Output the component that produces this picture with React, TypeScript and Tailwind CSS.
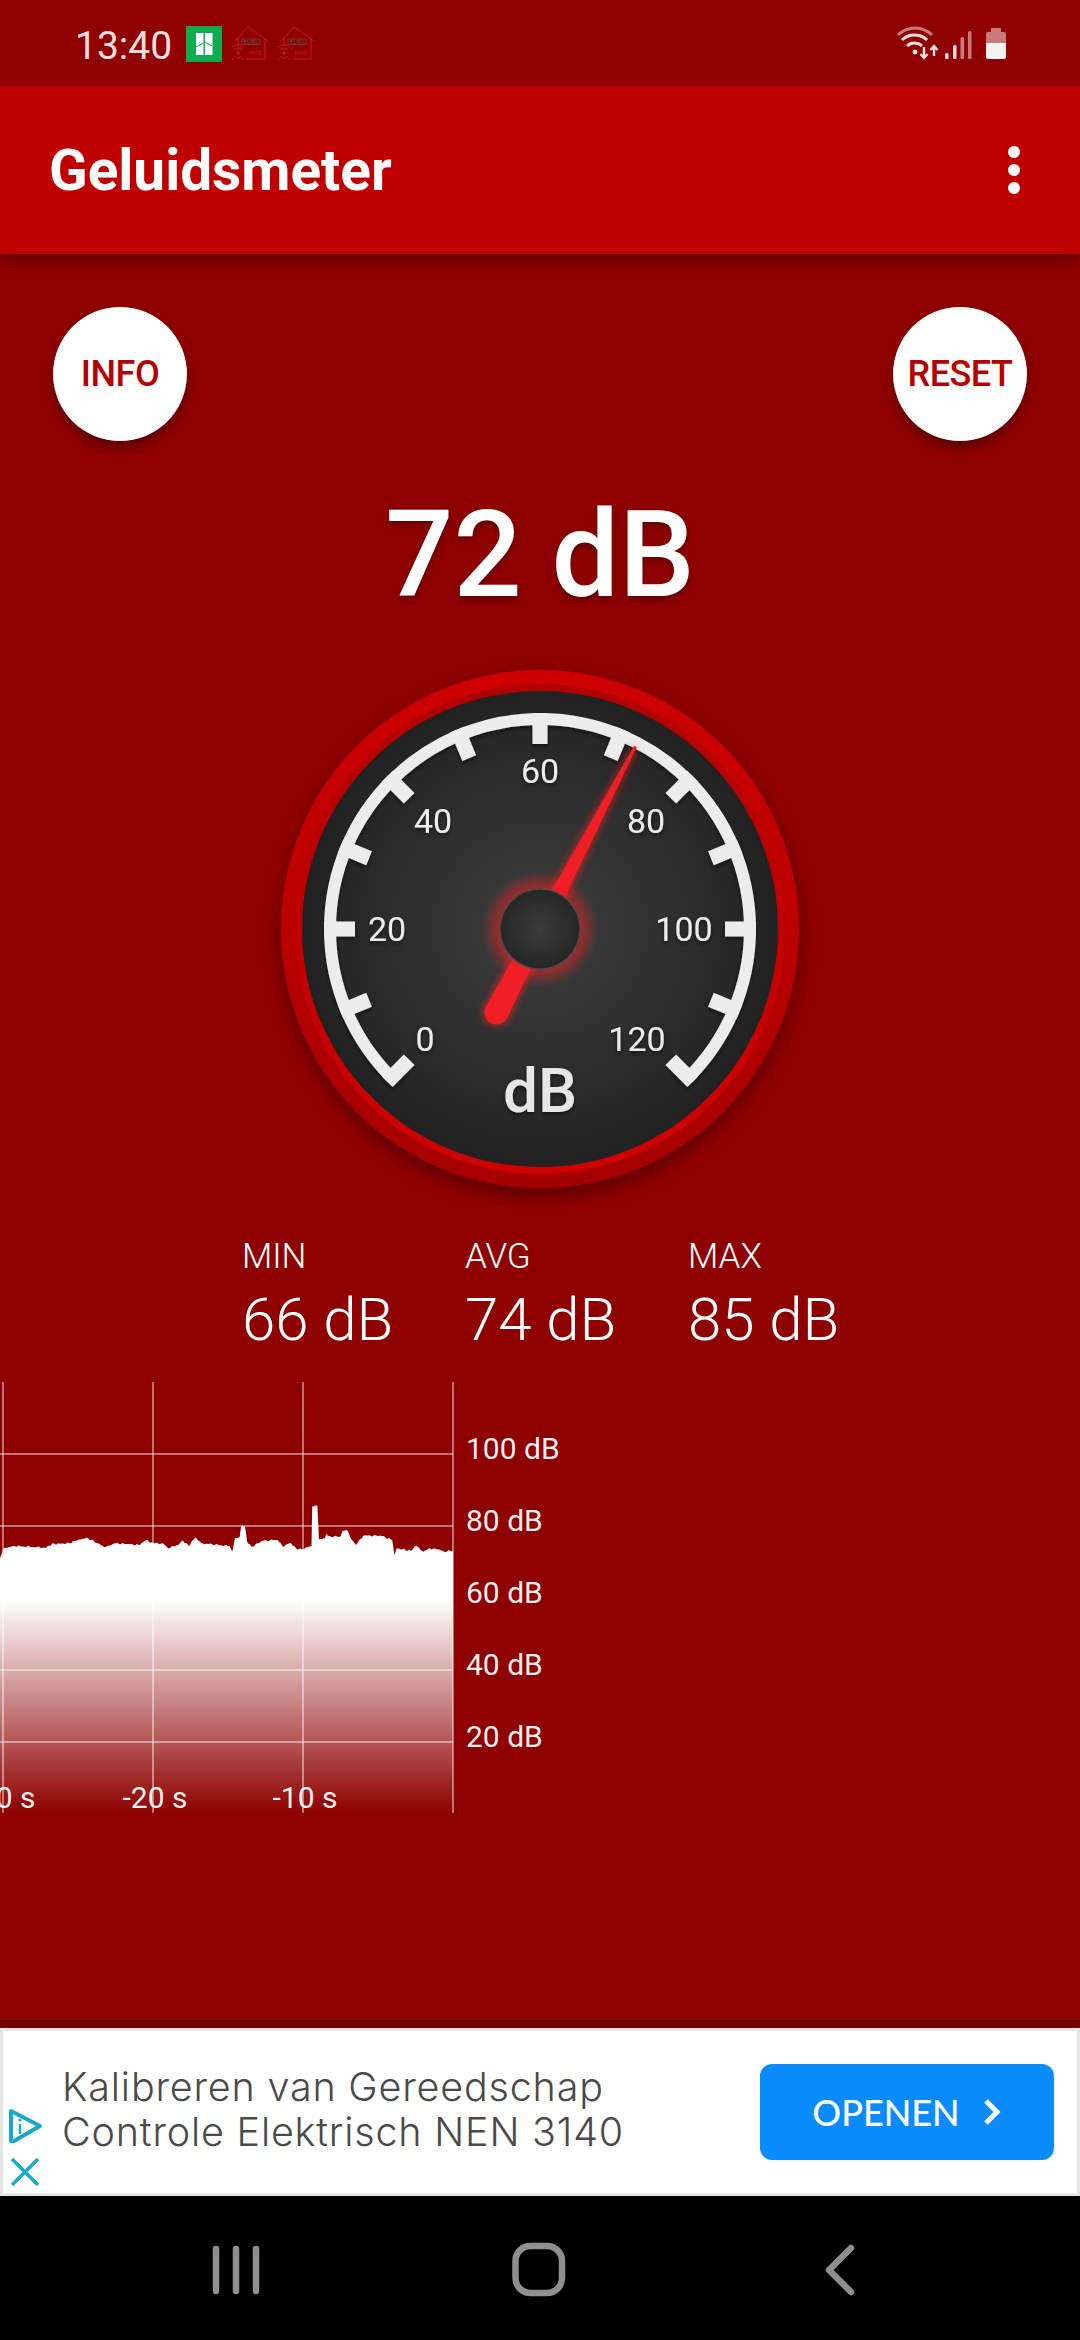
const roboto = "font-['Roboto',sans-serif]";

const points = [
  [0, 565], [10, 535], [40, 528], [125, 533], [140, 522], [190, 520], [205, 512], [235, 503], [265, 520], [285, 532],
  [310, 520], [340, 522], [375, 525], [395, 510], [415, 520], [440, 520], [455, 535], [480, 525], [495, 512], [510, 528],
  [528, 502], [545, 520], [620, 528], [628, 545], [635, 505], [648, 500], [652, 468], [662, 468], [668, 515], [680, 530],
  [710, 512], [750, 510], [765, 530], [785, 518], [800, 535], [815, 538], [842, 528], [844, 408], [858, 408], [862, 508],
  [878, 505], [882, 492], [895, 500], [920, 500], [926, 482], [940, 482], [948, 505], [962, 525], [982, 497], [1030, 497],
  [1060, 510], [1066, 555], [1072, 535], [1110, 542], [1125, 527], [1145, 545], [1162, 535], [1190, 540], [1200, 545], [1224, 542],
];

// zoomed coords to page coords, chart svg starts at y=1382, small jitter so the edge isn't too clean
function buildWave() {
  const out: string[] = [];
  for (let i = 0; i < points.length - 1; i++) {
    const [x0, y0] = points[i];
    const [x1, y1] = points[i + 1];
    const steps = Math.max(1, Math.round((x1 - x0) / 4));
    for (let s = 0; s < steps; s++) {
      const x = x0 + ((x1 - x0) * s) / steps;
      const y = y0 + ((y1 - y0) * s) / steps;
      const jitter = s === 0 ? 0 : (Math.sin(x * 1.3) + Math.sin(x * 0.47)) * 0.5;
      out.push(`${(x / 2.703).toFixed(1)} ${(y / 3 - 12 + jitter).toFixed(1)}`);
    }
  }
  return `M0 431 L${out.join(" L")} L453 ${(542 / 3 - 12).toFixed(1)} L453 431 Z`;
}
const wavePath = buildWave();

function House({ className }: { className?: string }) {
  return (
    <svg className={className} width="36" height="34" viewBox="0 0 36 34" fill="none">
      <path d="M3 15 L16 1 L36 15 M33 13 V33 H15 M6 12 V20" stroke="#d01535" strokeWidth="1" />
      <rect x="10" y="13" width="18" height="5.5" stroke="#6a4a4a" strokeWidth="0.7" />
      <text x="19" y="18" textAnchor="middle" fontSize="6" fill="#6a4a4a" className="font-['Roboto',sans-serif]">ELRO</text>
      <text x="23" y="29" textAnchor="middle" fontSize="6" fill="#d01535" className="font-['Roboto',sans-serif]">HIVE</text>
      <circle cx="6" cy="27" r="1.6" fill="#d01535" />
      <path d="M2 24 A5 5 0 0 1 10 24 M2 30 A5 5 0 0 0 10 30 M0 21 A9 9 0 0 1 12 21 M0 33 A9 9 0 0 0 12 33" stroke="#d01535" strokeWidth="1" />
    </svg>
  );
}

function StatusBar() {
  return (
    <div className="h-[86px] bg-[#8f0000] flex items-center pl-[75px] pr-[74px] shrink-0 relative z-10">
      <span className={`${roboto} text-[39px] leading-none text-[#f7dede] w-[111px] mt-[6px]`}>13:40</span>
      <svg width="36" height="36" viewBox="0 0 36 36" className="mt-[2px]">
        <rect width="36" height="36" fill="#0fac4f" />
        <rect x="10" y="7" width="7.5" height="22" fill="#fff" />
        <rect x="19" y="7" width="7.5" height="22" fill="#fff" />
        <path d="M10 21 L19 16 L26 20" stroke="#0fac4f" strokeWidth="1" fill="none" />
      </svg>
      <House className="ml-[10px]" />
      <House className="ml-[10px]" />
      <div className="flex-1" />
      <svg width="110" height="36" viewBox="0 0 110 36" fill="none">
        <path d="M2 10 A24 24 0 0 1 36 10" stroke="#f7dede" strokeOpacity="0.55" strokeWidth="3" />
        <path d="M6 15 A18 18 0 0 1 31 15" stroke="#f7dede" strokeWidth="3" />
        <path d="M11 21 A11 11 0 0 1 26 21" stroke="#f7dede" strokeWidth="3" />
        <circle cx="19" cy="27" r="2.4" fill="#f7dede" />
        <path d="M28 22 V33 M24.5 29 L28 33 L31.5 29" stroke="#f7dede" strokeWidth="2.4" />
        <path d="M38 31 V21 M34.5 25 L38 21 L41.5 25" stroke="#f7dede" strokeWidth="2.4" />
        <rect x="49" y="28" width="3.5" height="6" rx="1.5" fill="#f7dede" />
        <rect x="57" y="20" width="3.5" height="14" rx="1.5" fill="#f7dede" />
        <rect x="64.5" y="12" width="3.5" height="22" rx="1.5" fill="#f7dede" fillOpacity="0.55" />
        <rect x="72" y="6" width="3.5" height="28" rx="1.5" fill="#f7dede" fillOpacity="0.55" />
        <path d="M90 18 V9 Q90 7 92 7 H95 V3 H105 V7 H108 Q110 7 110 9 V18 Z" fill="#f7dede" fillOpacity="0.55" />
        <path d="M90 18 H110 V32 Q110 34 108 34 H92 Q90 34 90 32 Z" fill="#f7f0f0" />
      </svg>
    </div>
  );
}

function AppBar() {
  return (
    <div className="h-[168px] bg-[#bf0000] flex items-center justify-between pl-[49px] shrink-0 shadow-[0_6px_14px_rgba(0,0,0,0.3)] relative">
      <h1 className={`${roboto} text-[56.75px] font-bold text-white mt-[2px]`}>Geluidsmeter</h1>
      <div className="w-[132px] flex flex-col items-center gap-[6px]">
        <div className="w-3 h-3 rounded-full bg-white" />
        <div className="w-3 h-3 rounded-full bg-white" />
        <div className="w-3 h-3 rounded-full bg-white" />
      </div>
    </div>
  );
}

function RoundButton({ label }: { label: string }) {
  return (
    <button className={`${roboto} w-[134px] h-[134px] rounded-full bg-white text-[#b40000] text-[36px] font-medium tracking-[-0.5px] shadow-[0_7px_10px_rgba(0,0,0,0.32)]`}>
      {label}
    </button>
  );
}

function Gauge() {
  const cx = 280;
  const cy = 280;
  const ticks = [-135, -112.5, -90, -67.5, -45, -22.5, 0, 22.5, 45, 67.5, 90, 112.5, 135];
  const labels = [
    { t: "0", x: 165, y: 389.5 },
    { t: "20", x: 127, y: 279.5 },
    { t: "40", x: 173, y: 171.5 },
    { t: "60", x: 280, y: 121.5 },
    { t: "80", x: 386, y: 171.5 },
    { t: "100", x: 424, y: 279.5 },
    { t: "120", x: 377, y: 389.5 },
  ];
  const pt = (deg: number, r: number) => {
    const a = (deg * Math.PI) / 180;
    return [cx + r * Math.sin(a), cy - r * Math.cos(a)];
  };
  const [ax, ay] = pt(-135, 210);
  const [bx, by] = pt(135, 210);

  return (
    <svg width="560" height="560" viewBox="0 0 560 560" className="block">
      <defs>
        <linearGradient id="rim" x1="0" y1="0" x2="0" y2="1">
          <stop offset="0" stopColor="#cf0000" />
          <stop offset="1" stopColor="#a50000" />
        </linearGradient>
        <linearGradient id="rim2" x1="0" y1="0" x2="0" y2="1">
          <stop offset="0" stopColor="#b00000" />
          <stop offset="1" stopColor="#cf0000" />
        </linearGradient>
        <radialGradient id="face">
          <stop offset="0" stopColor="#3f3f3f" />
          <stop offset="1" stopColor="#222222" />
        </radialGradient>
        <radialGradient id="hub">
          <stop offset="0" stopColor="#3c3c3c" />
          <stop offset="1" stopColor="#262626" />
        </radialGradient>
        <radialGradient id="hubGlow">
          <stop offset="0.7" stopColor="#ff2020" stopOpacity="0.5" />
          <stop offset="1" stopColor="#ff2020" stopOpacity="0" />
        </radialGradient>
        <filter id="drop" x="-20%" y="-20%" width="140%" height="140%">
          <feDropShadow dx="0" dy="8" stdDeviation="9" floodColor="#000" floodOpacity="0.35" />
        </filter>
        <filter id="soft" x="-20%" y="-20%" width="140%" height="140%">
          <feDropShadow dx="0" dy="2" stdDeviation="2" floodColor="#000" floodOpacity="0.5" />
        </filter>
        <filter id="glow" x="-60%" y="-20%" width="220%" height="140%">
          <feGaussianBlur stdDeviation="4" />
        </filter>
      </defs>
      <circle cx={cx} cy={cy} r="259" fill="url(#rim)" filter="url(#drop)" />
      <circle cx={cx} cy={cy} r="245" fill="url(#rim2)" />
      <circle cx={cx} cy={cy} r="238" fill="url(#face)" />

      <g filter="url(#soft)">
        <path d={`M${ax} ${ay} A210 210 0 1 1 ${bx} ${by}`} fill="none" stroke="#ececec" strokeWidth="12" />
        {ticks.map((deg) => {
          const [x1, y1] = pt(deg, 216);
          const [x2, y2] = pt(deg, 185);
          return <line key={deg} x1={x1} y1={y1} x2={x2} y2={y2} stroke="#ececec" strokeWidth="15" />;
        })}
        {labels.map((l) => (
          <text key={l.t} x={l.x} y={l.y + 12} textAnchor="middle" fontSize="34" fill="#ececec" className={roboto}>
            {l.t}
          </text>
        ))}
        <text x={cx} y={463} textAnchor="middle" fontSize="62" fontWeight="500" fill="#e6e6e6" className={roboto}>
          dB
        </text>
      </g>

      <circle cx={cx} cy={cy} r="58" fill="url(#hubGlow)" />
      <g transform={`rotate(27.6 ${cx} ${cy})`}>
        <path d="M278 76 H282 L293 374 A13 13 0 0 1 267 374 Z" fill="#ff2020" filter="url(#glow)" opacity="0.7" />
        <path d="M278.5 74 H281.5 L292 374 A12 12 0 0 1 268 374 Z" fill="#f01f26" />
      </g>
      <circle cx={cx} cy={cy} r="40" fill="url(#hub)" stroke="#4a4a4a" strokeWidth="1.5" />
    </svg>
  );
}

function Stats() {
  const items = [
    { label: "MIN", value: "66 dB" },
    { label: "AVG", value: "74 dB" },
    { label: "MAX", value: "85 dB" },
  ];
  return (
    <div className="flex pl-[242px] mt-[28px]">
      {items.map((item) => (
        <div key={item.label} className={`${roboto} w-[223px] text-white font-light`}>
          <div className="text-[35px] leading-[40px]">{item.label}</div>
          <div className="text-[60px] leading-[68px] mt-[9px]">{item.value}</div>
        </div>
      ))}
    </div>
  );
}

function Chart() {
  const xs = [3, 153, 303, 453];
  const ys = [72, 144, 216, 288, 360];
  const dbLabels = ["100 dB", "80 dB", "60 dB", "40 dB", "20 dB"];
  const timeLabels = [
    { t: "-30 s", x: 3 },
    { t: "-20 s", x: 155 },
    { t: "-10 s", x: 305 },
  ];
  return (
    <svg width="1080" height="432" viewBox="0 0 1080 432" className={`block ${roboto}`}>
      <defs>
        <linearGradient id="fade" gradientUnits="userSpaceOnUse" x1="0" y1="218" x2="0" y2="431">
          <stop offset="0" stopColor="#fff" />
          <stop offset="1" stopColor="#fff" stopOpacity="0" />
        </linearGradient>
      </defs>
      <path d={wavePath} fill="url(#fade)" />
      {xs.map((x) => (
        <line key={x} x1={x} y1="0" x2={x} y2="431" stroke="#fff" strokeOpacity="0.6" strokeWidth="1.5" />
      ))}
      {ys.map((y) => (
        <line key={y} x1="0" y1={y} x2="453" y2={y} stroke="#fff" strokeOpacity="0.6" strokeWidth="1.5" />
      ))}
      {dbLabels.map((t, i) => (
        <text key={t} x="466" y={ys[i] + 5} fontSize="30" fill="#fff" fillOpacity="0.95">
          {t}
        </text>
      ))}
      {timeLabels.map((l) => (
        <text key={l.t} x={l.x} y="426" textAnchor="middle" fontSize="30" fill="#fff" fillOpacity="0.95">
          {l.t}
        </text>
      ))}
    </svg>
  );
}

function AdBanner() {
  return (
    <div className="h-[168px] bg-white border-[3px] border-[#e6e6e6] flex items-center shrink-0">
      <div className="w-[59px] h-full flex flex-col items-start justify-end pb-[6px] pl-[4px] gap-[12px] shrink-0">
        <svg width="36" height="38" viewBox="0 0 36 38" fill="none">
          <path d="M4 4 L33 19 L7 34 L4 34 Z" stroke="#17a9c9" strokeWidth="4" strokeLinejoin="round" />
          <path d="M13 17 V27" stroke="#17a9c9" strokeWidth="2.5" />
          <circle cx="13" cy="13" r="1.6" fill="#17a9c9" />
        </svg>
        <svg width="30" height="30" viewBox="0 0 30 30" fill="none" className="ml-[3px]">
          <path d="M2 2 L28 28 M28 2 L2 28" stroke="#17a9c9" strokeWidth="3.5" />
        </svg>
      </div>
      <div className="flex-1 font-['Inter',sans-serif] font-light text-[39.5px] tracking-[0.8px] leading-[45px] whitespace-nowrap text-[#4a4a4a] mt-[-4px]">
        <div>Kalibreren van Gereedschap</div>
        <div>Controle Elektrisch NEN 3140</div>
      </div>
      <div className="w-[294px] h-[96px] mr-[23px] rounded-[12px] bg-[#0a8cff] flex items-center justify-center gap-[22px] text-white">
        <span className="font-['Lato',sans-serif] font-medium text-[36px]">OPENEN</span>
        <svg width="20" height="28" viewBox="0 0 20 28" fill="none">
          <path d="M4 3 L15 14 L4 25" stroke="#fff" strokeWidth="5" />
        </svg>
      </div>
    </div>
  );
}

function NavBar() {
  return (
    <div className="h-[144px] bg-black shrink-0">
      <svg width="1080" height="144" viewBox="0 0 1080 144" fill="none" className="block">
        <path d="M216 53 V95 M236 53 V95 M256 53 V95" stroke="#8f8f8f" strokeWidth="6.5" strokeLinecap="round" />
        <rect x="515.5" y="50" width="46.5" height="47" rx="15" stroke="#8f8f8f" strokeWidth="6.5" />
        <path d="M851 52 L829 74 L851 96" stroke="#8f8f8f" strokeWidth="6.5" strokeLinecap="round" strokeLinejoin="round" />
      </svg>
    </div>
  );
}

export default function App() {
  return (
    <div className="w-[1080px] h-[2340px] flex flex-col overflow-hidden bg-[#8e0000]">
      <StatusBar />
      <AppBar />
      <main className="flex-1 flex flex-col">
        <div className="flex justify-between px-[53px] pt-[53px]">
          <RoundButton label="INFO" />
          <RoundButton label="RESET" />
        </div>
        <div className={`${roboto} text-center text-[120px] leading-[140px] font-medium text-white mt-[44px] [text-shadow:0_4px_6px_rgba(0,0,0,0.3)]`}>
          72 dB
        </div>
        <div className="flex justify-center mt-[24px]">
          <Gauge />
        </div>
        <Stats />
        <div className="mt-[28px]">
          <Chart />
        </div>
        <div className="flex-1" />
        <div className="h-[8px] bg-[#6f0000]" />
      </main>
      <AdBanner />
      <NavBar />
    </div>
  );
}
